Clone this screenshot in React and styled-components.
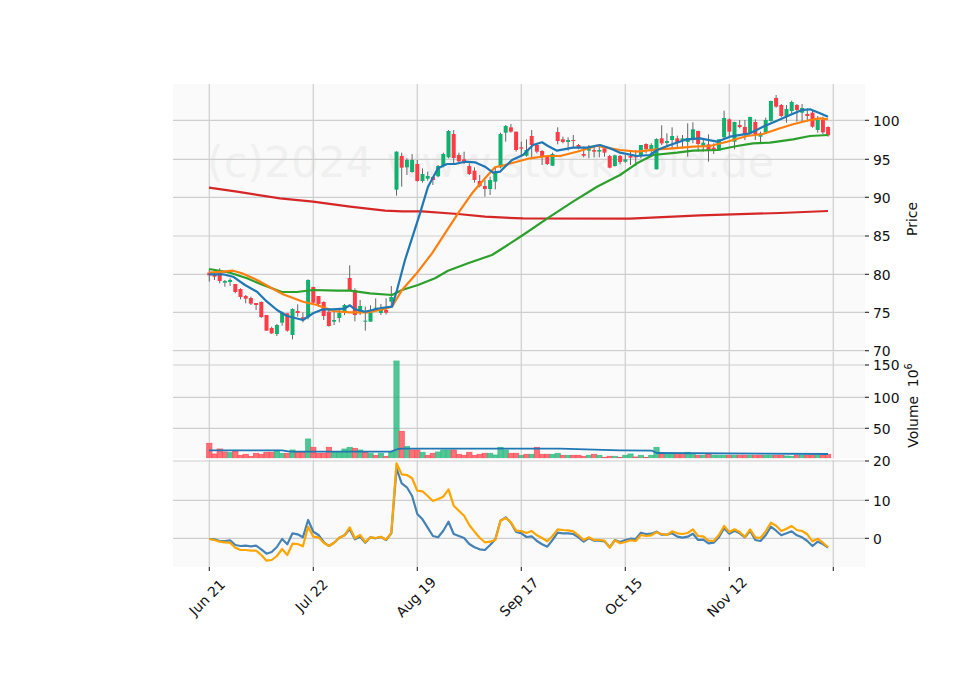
import React from 'react';
import styled, { createGlobalStyle } from 'styled-components';

// Vertical values below are in thirds of a pixel, measured from the panel origin
const priceY = (v) => 80 + v / 3;
const volumeY = (v) => 350 + v / 3;
const macdY = (v) => 460 + v / 3;
const candleX = (i) => 209.3 + 5.2 * i;

// wick top, body top, body bottom, wick bottom, colour
const candles = [
  [570, 578, 586, 605, 'r'], [578, 583, 590, 600, 'r'], [565, 572, 603, 610, 'r'], [600, 603, 608, 620, 'g'],
  [595, 600, 606, 618, 'g'], [612, 612, 636, 640, 'r'], [625, 627, 651, 658, 'r'], [645, 648, 656, 670, 'r'],
  [650, 654, 671, 675, 'r'], [669, 669, 675, 690, 'r'], [664, 666, 711, 714, 'r'], [705, 705, 752, 752, 'r'],
  [740, 744, 760, 762, 'r'], [732, 735, 762, 768, 'g'], [695, 698, 728, 737, 'g'], [700, 700, 752, 755, 'r'],
  [685, 687, 765, 778, 'g'], [673, 693, 699, 710, 'r'], [697, 712, 720, 727, 'r'], [598, 600, 712, 718, 'g'],
  [620, 621, 668, 672, 'r'], [648, 648, 672, 680, 'r'], [664, 666, 708, 720, 'r'], [685, 695, 738, 740, 'r'],
  [695, 720, 725, 735, 'g'], [690, 698, 714, 727, 'g'], [672, 675, 697, 705, 'g'], [556, 594, 632, 632, 'r'],
  [625, 630, 705, 724, 'r'], [660, 678, 698, 705, 'g'], [680, 722, 724, 752, 'g'], [676, 696, 725, 725, 'g'],
  [655, 683, 686, 690, 'g'], [672, 690, 699, 705, 'g'], [655, 690, 698, 703, 'r'], [618, 651, 665, 680, 'g'],
  [214, 215, 329, 347, 'g'], [218, 228, 263, 320, 'r'], [235, 240, 262, 285, 'g'], [222, 240, 276, 278, 'g'],
  [240, 252, 303, 305, 'r'], [265, 282, 303, 308, 'g'], [275, 288, 296, 302, 'g'], [290, 291, 300, 315, 'r'],
  [255, 258, 289, 292, 'g'], [218, 222, 258, 262, 'g'], [150, 153, 232, 235, 'g'], [150, 162, 234, 250, 'r'],
  [218, 225, 244, 250, 'r'], [215, 238, 245, 252, 'r'], [250, 258, 282, 285, 'r'], [262, 272, 300, 308, 'r'],
  [285, 303, 318, 322, 'r'], [300, 318, 327, 350, 'r'], [290, 300, 327, 345, 'g'], [262, 275, 305, 328, 'g'],
  [158, 162, 262, 265, 'g'], [135, 138, 158, 185, 'g'], [132, 142, 155, 158, 'r'], [155, 155, 210, 215, 'r'],
  [185, 202, 206, 228, 'r'], [178, 210, 227, 230, 'g'], [150, 168, 195, 232, 'r'], [190, 195, 215, 220, 'r'],
  [210, 213, 228, 255, 'r'], [225, 228, 252, 255, 'r'], [218, 222, 257, 258, 'g'], [142, 156, 183, 193, 'r'],
  [170, 178, 186, 190, 'r'], [172, 180, 186, 212, 'g'], [165, 180, 182, 205, 'r'], [192, 195, 203, 208, 'r'],
  [200, 222, 227, 232, 'r'], [195, 205, 212, 235, 'g'], [200, 210, 215, 232, 'r'], [195, 210, 215, 232, 'g'],
  [200, 205, 218, 230, 'r'], [225, 228, 263, 265, 'r'], [224, 226, 258, 260, 'g'], [225, 228, 246, 253, 'r'],
  [225, 238, 245, 248, 'g'], [215, 228, 233, 255, 'r'], [210, 229, 232, 258, 'r'], [195, 195, 225, 235, 'g'],
  [190, 192, 207, 220, 'r'], [190, 195, 210, 225, 'g'], [175, 177, 268, 268, 'g'], [136, 175, 190, 195, 'r'],
  [160, 183, 189, 200, 'g'], [142, 168, 180, 205, 'g'], [167, 175, 186, 205, 'r'], [165, 175, 182, 205, 'g'],
  [130, 174, 186, 230, 'g'], [127, 148, 178, 190, 'g'], [152, 153, 192, 215, 'r'], [178, 188, 198, 215, 'g'],
  [163, 193, 210, 245, 'r'], [190, 203, 210, 222, 'r'], [178, 178, 212, 212, 'g'], [92, 114, 172, 175, 'g'],
  [115, 118, 155, 175, 'r'], [125, 126, 185, 208, 'g'], [120, 135, 141, 145, 'r'], [120, 141, 165, 180, 'r'],
  [110, 111, 160, 162, 'g'], [118, 126, 162, 180, 'r'], [155, 160, 170, 190, 'g'], [113, 120, 158, 160, 'g'],
  [62, 63, 123, 125, 'g'], [45, 54, 80, 83, 'r'], [72, 75, 108, 112, 'r'], [75, 87, 108, 128, 'g'],
  [62, 66, 93, 100, 'g'], [72, 75, 90, 125, 'r'], [72, 84, 98, 125, 'g'], [85, 102, 108, 125, 'r'],
  [90, 98, 140, 143, 'r'], [108, 120, 150, 158, 'g'], [110, 120, 157, 162, 'r'], [139, 141, 166, 170, 'r'],
];

const volumes = [
  [280, 'r'], [312, 'r'], [297, 'r'], [306, 'r'], [308, 'g'], [303, 'r'], [316, 'r'], [313, 'r'], [319, 'r'], [310, 'r'],
  [313, 'r'], [307, 'r'], [307, 'r'], [303, 'g'], [310, 'g'], [310, 'r'], [300, 'g'], [307, 'r'], [307, 'r'], [267, 'g'],
  [292, 'r'], [310, 'r'], [310, 'r'], [292, 'r'], [306, 'g'], [306, 'g'], [297, 'g'], [292, 'g'], [295, 'r'], [300, 'g'],
  [306, 'r'], [310, 'g'], [316, 'r'], [310, 'g'], [319, 'r'], [306, 'g'], [33, 'g'], [244, 'r'], [289, 'g'], [300, 'r'],
  [300, 'r'], [307, 'g'], [316, 'r'], [310, 'r'], [306, 'g'], [300, 'g'], [300, 'g'], [300, 'r'], [313, 'r'], [316, 'r'],
  [307, 'r'], [316, 'r'], [313, 'r'], [310, 'r'], [310, 'g'], [315, 'g'], [292, 'g'], [300, 'g'], [310, 'r'], [310, 'r'],
  [316, 'g'], [313, 'r'], [313, 'g'], [292, 'r'], [313, 'r'], [313, 'r'], [313, 'g'], [310, 'g'], [316, 'r'], [316, 'g'],
  [316, 'r'], [316, 'r'], [319, 'r'], [316, 'g'], [313, 'r'], [316, 'g'], [322, 'r'], [319, 'r'], [319, 'g'], [322, 'r'],
  [316, 'g'], [312, 'g'], [321, 'r'], [316, 'g'], [322, 'r'], [316, 'g'], [292, 'g'], [312, 'r'], [313, 'g'], [313, 'g'],
  [314, 'r'], [314, 'r'], [307, 'g'], [314, 'g'], [316, 'r'], [316, 'g'], [313, 'r'], [316, 'g'], [316, 'g'], [316, 'g'],
  [316, 'r'], [316, 'g'], [316, 'r'], [316, 'r'], [316, 'g'], [316, 'r'], [316, 'r'], [316, 'g'], [316, 'g'], [316, 'r'],
  [316, 'r'], [318, 'g'], [319, 'g'], [316, 'r'], [316, 'g'], [316, 'r'], [316, 'r'], [316, 'g'], [316, 'r'], [313, 'r'],
];

// moving averages as [x, y] pairs
const maBlue = [
  [209, 583], [223, 583], [233, 590], [245, 615], [257, 635], [267, 665], [277, 690], [287, 708], [303, 720], [313, 700],
  [323, 688], [333, 688], [344, 686], [350, 676], [355, 688], [365, 695], [381, 684], [392, 680], [397, 630], [405, 540],
  [420, 400], [428, 320], [438, 265], [447, 252], [455, 252], [465, 245], [475, 247], [485, 260], [493, 278], [500, 275],
  [505, 260], [512, 240], [523, 225], [533, 195], [542, 187], [548, 198], [557, 212], [573, 203], [587, 203], [600, 195], [610, 205],
  [620, 218], [637, 228], [650, 225], [657, 210], [670, 195], [687, 178], [700, 175], [717, 185], [730, 170], [750, 160],
  [763, 140], [777, 122], [790, 105], [802, 90], [810, 88], [820, 100], [828, 110],
];
const maOrange = [
  [209, 578], [223, 575], [233, 572], [242, 580], [257, 600], [270, 622], [283, 643], [303, 665], [317, 675], [333, 693],
  [350, 697], [367, 697], [380, 690], [392, 680], [402, 630], [418, 575], [432, 520], [445, 460], [458, 400], [472, 340],
  [485, 295], [495, 262], [505, 255], [513, 248], [530, 235], [547, 228], [560, 228], [577, 215], [597, 197], [610, 205], [620, 210], [637, 215],
  [657, 208], [673, 205], [693, 200], [710, 198], [727, 185], [747, 168], [763, 162], [780, 145], [793, 133], [810, 120],
  [820, 115], [828, 118],
];
const maGreen = [
  [209, 567], [230, 578], [247, 595], [263, 615], [282, 636], [297, 636], [313, 630], [337, 632], [350, 632], [370, 640],
  [392, 645], [402, 630], [418, 615], [435, 595], [448, 572], [468, 550], [492, 525], [505, 500], [523, 465], [550, 410], [573, 365],
  [597, 320], [620, 285], [637, 250], [653, 225], [677, 218], [693, 212], [717, 210], [737, 198], [753, 190], [770, 188],
  [793, 178], [810, 168], [828, 165],
];
const maRed = [
  [209, 323], [237, 335], [280, 355], [313, 365], [350, 380], [385, 392], [402, 394], [422, 394], [458, 402], [485, 410], [505, 413], [523, 415],
  [630, 416], [700, 406], [780, 399], [828, 393],
];
const volumeAvg = [
  [209, 301], [282, 301], [290, 305], [391, 305], [398, 297], [402, 296], [560, 296], [620, 301], [652, 302], [657, 309], [828, 312],
];

const macdLine = [
  237, 238, 243, 243, 241, 255, 258, 257, 259, 257, 268, 281, 276, 261, 237, 253, 220, 223, 232, 180,
  215, 225, 246, 258, 248, 233, 226, 208, 238, 230, 248, 232, 235, 231, 240, 220, 25, 70, 82, 108,
  162, 178, 203, 228, 232, 212, 185, 222, 228, 234, 252, 262, 268, 270, 255, 238, 182, 172, 188, 216,
  220, 231, 229, 243, 253, 260, 240, 218, 220, 220, 222, 232, 245, 234, 242, 242, 244, 262, 240, 246,
  240, 236, 237, 218, 222, 221, 215, 224, 224, 220, 230, 233, 230, 221, 240, 239, 250, 248, 232, 205,
  221, 212, 220, 232, 212, 240, 243, 226, 200, 212, 226, 220, 214, 226, 232, 243, 258, 245, 252, 263,
];
const signalLine = [
  237, 240, 245, 247, 248, 263, 270, 270, 272, 272, 285, 302, 300, 288, 267, 285, 251, 252, 259, 200,
  230, 232, 248, 258, 248, 233, 226, 202, 235, 225, 246, 232, 234, 230, 239, 219, 10, 43, 45, 55,
  92, 94, 108, 123, 117, 110, 88, 137, 152, 167, 195, 215, 233, 247, 245, 240, 182, 174, 187, 212,
  213, 219, 213, 226, 234, 244, 228, 208, 210, 211, 214, 226, 240, 232, 240, 240, 242, 263, 241, 250,
  246, 241, 243, 225, 228, 226, 217, 222, 225, 214, 220, 222, 219, 208, 228, 229, 242, 243, 225, 198,
  216, 208, 216, 231, 208, 232, 234, 214, 188, 197, 213, 206, 198, 210, 213, 223, 244, 236, 248, 262,
];

const xTicks = [
  { x: 209.3, label: 'Jun 21', lx: 210.5, ly: 601 },
  { x: 313.3, label: 'Jul 22', lx: 315, ly: 599 },
  { x: 417.3, label: 'Aug 19', lx: 419.5, ly: 600.5 },
  { x: 521.3, label: 'Sep 17', lx: 522.5, ly: 600.5 },
  { x: 625.3, label: 'Oct 15', lx: 627, ly: 600 },
  { x: 729.3, label: 'Nov 12', lx: 730.5, ly: 600.5 },
  { x: 833.3 },
];

const panels = [
  { top: 84, bottom: 351, ticks: [[120.3, '100'], [159.3, '95'], [197.3, '90'], [236, '85'], [274.3, '80'], [312.3, '75'], [350.7, '70']] },
  { top: 351.5, bottom: 458.5, ticks: [[365, '150'], [397.3, '100'], [428.3, '50']] },
  { top: 460, bottom: 567, ticks: [[461, '20'], [500.3, '10'], [538.3, '0']] },
];

const toPoints = (points, mapY) => points.map(([x, y]) => `${x},${mapY(y).toFixed(1)}`).join(' ');
const seriesPoints = (values) => values.map((v, i) => `${candleX(i).toFixed(1)},${macdY(v).toFixed(1)}`).join(' ');

const GlobalStyle = createGlobalStyle`
  html, body {
    margin: 0;
    background: #fff;
  }
`;

const Figure = styled.div`
  width: 960px;
  height: 690px;
  overflow: hidden;
`;

const ChartSvg = styled.svg`
  display: block;
  width: 960px;
  height: 690px;
  font-family: 'DejaVu Sans', sans-serif;
`;

const PanelBackground = styled.rect`
  fill: #fafafa;
`;

const GridLine = styled.line`
  stroke: #cecece;
  stroke-width: 1.2;
`;

const TickMark = styled.line`
  stroke: #222;
  stroke-width: 1.1;
`;

const TickLabel = styled.text`
  font-size: 13.9px;
  fill: #111;
`;

const AxisLabel = styled.text`
  font-size: 13.9px;
  fill: #111;
  text-anchor: middle;
  white-space: pre;
`;

const Exponent = styled.tspan`
  font-size: 9.7px;
`;

const Watermark = styled.text`
  font-size: 42.8px;
  fill: #f0f0f0;
`;

const Wick = styled.line`
  stroke: #666;
  stroke-width: 1;
`;

const CandleBody = styled.rect`
  fill: ${(props) => (props.$up ? '#11b06f' : '#ff3b45')};
`;

const VolumeBar = styled.rect`
  fill: ${(props) => (props.$up ? '#11b06f' : '#ff3b45')};
  fill-opacity: 0.72;
  stroke: ${(props) => (props.$up ? '#3fc28a' : '#ff5560')};
  stroke-width: 0.8;
`;

const Curve = styled.polyline`
  fill: none;
  stroke: ${(props) => props.$color};
  stroke-width: ${(props) => props.$width || 2.2}px;
  stroke-linejoin: round;
`;

export default function App() {
  return (
    <Figure>
      <GlobalStyle />
      <ChartSvg viewBox="0 0 960 690">
        {panels.map((panel) => (
          <PanelBackground key={panel.top} x="173" y={panel.top} width="692" height={panel.bottom - panel.top} />
        ))}

        <Watermark x="207" y="177">(c)2024 www.stockhold.de</Watermark>

        {panels.map((panel) =>
          panel.ticks.map(([y, label]) => (
            <g key={`${panel.top}-${label}`}>
              <GridLine x1="173" x2="865" y1={y} y2={y} />
              <TickMark x1="865" x2="869" y1={y} y2={y} />
              <TickLabel x="873" y={y + 5.3}>{label}</TickLabel>
            </g>
          ))
        )}

        {panels.map((panel) =>
          xTicks.map((tick) => (
            <GridLine key={`${panel.top}-${tick.x}`} x1={tick.x} x2={tick.x} y1={panel.top} y2={panel.bottom} />
          ))
        )}

        {xTicks.map((tick) => (
          <g key={tick.x}>
            <TickMark x1={tick.x} x2={tick.x} y1="567" y2="571" />
            {tick.label && (
              <AxisLabel x={tick.lx} y={tick.ly} transform={`rotate(-45 ${tick.lx} ${tick.ly})`}>
                {tick.label}
              </AxisLabel>
            )}
          </g>
        ))}

        <AxisLabel x="917" y="219" transform="rotate(-90 917 219)">Price</AxisLabel>
        <AxisLabel x="918" y="405.5" transform="rotate(-90 918 405.5)">
          Volume  10<Exponent dy="-6">6</Exponent>
        </AxisLabel>

        {candles.map(([wickTop, bodyTop, bodyBottom, wickBottom, color], i) => (
          <g key={i}>
            <Wick x1={candleX(i)} x2={candleX(i)} y1={priceY(wickTop)} y2={priceY(wickBottom)} />
            <CandleBody
              $up={color === 'g'}
              x={candleX(i) - 2}
              y={priceY(bodyTop)}
              width="4"
              height={Math.max((bodyBottom - bodyTop) / 3, 1)}
            />
          </g>
        ))}
        <Curve $color="#d62728" points={toPoints(maRed, priceY)} />
        <Curve $color="#2ca02c" points={toPoints(maGreen, priceY)} />
        <Curve $color="#ff7f0e" points={toPoints(maOrange, priceY)} />
        <Curve $color="#1f77b4" points={toPoints(maBlue, priceY)} />

        {volumes.map(([top, color], i) => (
          <VolumeBar
            key={i}
            $up={color === 'g'}
            x={candleX(i) - 2.6}
            y={volumeY(top)}
            width="5.2"
            height={(323 - top) / 3}
          />
        ))}
        <Curve $color="#1f77b4" $width={1.8} points={toPoints(volumeAvg, volumeY)} />

        <Curve $color="#4682b4" points={seriesPoints(macdLine)} />
        <Curve $color="#ffa500" points={seriesPoints(signalLine)} />
      </ChartSvg>
    </Figure>
  );
}
